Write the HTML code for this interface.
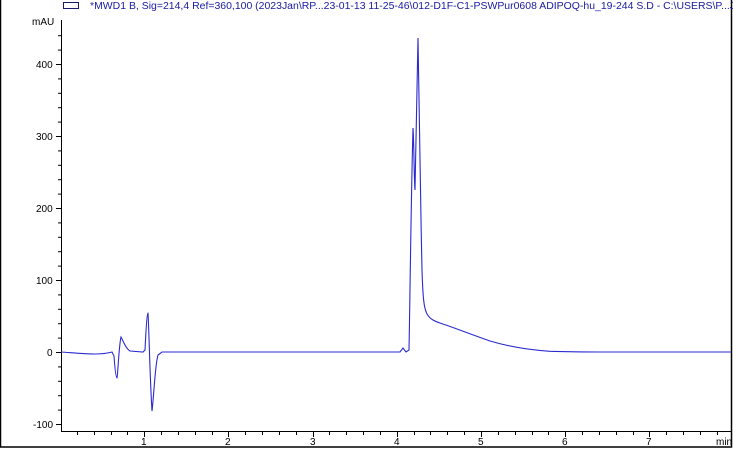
<!DOCTYPE html>
<html><head><meta charset="utf-8"><style>
html,body{margin:0;padding:0;background:#fff;width:733px;height:450px;overflow:hidden}
svg{display:block}
text{font-family:"Liberation Sans",Arial,sans-serif;font-size:10px;fill:#000}
</style></head><body>
<svg id="s" width="733" height="450" viewBox="0 0 733 450" xmlns="http://www.w3.org/2000/svg">
<rect x="0.5" y="-2" width="731" height="449" fill="#fff" stroke="#000" stroke-width="1.5"/>
<rect x="63.5" y="2.5" width="15" height="6" fill="none" stroke="#1a1a6e" stroke-width="1"/>
<text x="90" y="9" textLength="645" lengthAdjust="spacingAndGlyphs" style="fill:#1a1aa0;font-size:10px">*MWD1 B, Sig=214,4 Ref=360,100 (2023Jan\RP...23-01-13 11-25-46\012-D1F-C1-PSWPur0608 ADIPOQ-hu_19-244 S.D - C:\USERS\P...J</text>
<text x="32" y="25">mAU</text>
<line x1="61.5" y1="20" x2="61.5" y2="431" stroke="#000"/>
<line x1="61" y1="431.5" x2="731" y2="431.5" stroke="#000"/>
<g id="ticks" stroke="#000"></g>
<text x="36" y="68">400</text>
<text x="36" y="140">300</text>
<text x="36" y="212">200</text>
<text x="36" y="284">100</text>
<text x="47" y="356">0</text>
<text x="33" y="428">-100</text>
<text x="141" y="445">1</text>
<text x="225" y="445">2</text>
<text x="310" y="445">3</text>
<text x="394" y="445">4</text>
<text x="478" y="445">5</text>
<text x="562" y="445">6</text>
<text x="646" y="445">7</text>
<text x="716" y="445">min</text>
<path fill="none" stroke="#2a2ad0" stroke-width="1.1" d="M61,352 C75,353 85,354 95,354 S108,353 112,352 L114,356 C115,370 116,378 117,378 C118,372 119,345 121,337 C123,340 125,348 130,351 L143,352 L145,350 C146,330 147,313 148,313 C149,330 150,380 152,411 C154,395 155,365 158,355 L162,352 L300,352 L400,352 L403,348 L406,352 L409,350 C410,300 411,200 413,128 C414,140 414,180 415,190 C416,150 417,80 418,38 C419,80 420,180 422,270 C423,300 424,308 427,314 C430,319 434,321 440,323 C455,328 470,334 490,341 C510,347 530,350 550,351.3 C570,352 590,352 610,352 L731,352"/>
</svg>
<script>
var g=document.getElementById('ticks'),h='';
for(var v=-100;v<=440;v+=20){var y=352-v*0.72;var maj=v%100==0;h+='<line x1="'+(maj?56:58)+'" y1="'+(y+.5)+'" x2="61" y2="'+(y+.5)+'"/>';}
for(var t=0.2;t<8.05;t+=0.2){var x=Math.round(60+t*84.2)+.5;if(x>731)break;var maj=Math.abs(t-Math.round(t))<0.01;h+='<line x1="'+x+'" y1="432" x2="'+x+'" y2="'+(maj?437:435)+'"/>';}
g.innerHTML=h;
</script>
</body></html>
